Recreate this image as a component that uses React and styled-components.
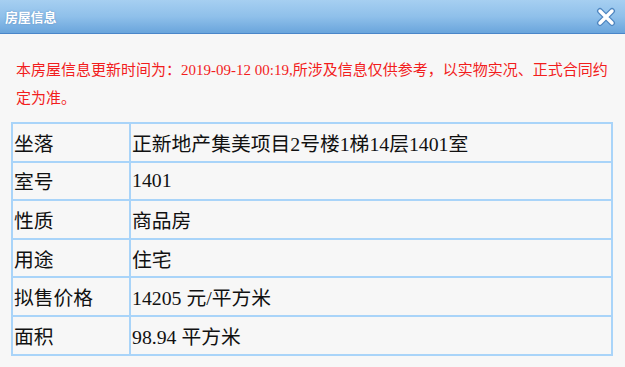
import React from 'react'
import styled, { createGlobalStyle } from 'styled-components'

const GlobalStyle = createGlobalStyle`
  html, body {
    margin: 0;
    padding: 0;
    background: #f7f7f7;
  }
`

const Dialog = styled.div`
  width: 625px;
  height: 367px;
  background: #f7f7f7;
  font-family: "Liberation Serif", "Noto Sans CJK SC", serif;
  overflow: hidden;
`

const TitleBar = styled.div`
  height: 34px;
  box-sizing: border-box;
  display: flex;
  align-items: center;
  justify-content: space-between;
  padding: 0 8px 0 5px;
  background: linear-gradient(#a6cff1, #8fc0ea 50%, #6aa5dc);
  border-bottom: 1px solid #4a86c9;
`

const Title = styled.span`
  color: #fff;
  font-family: "Noto Sans CJK SC", sans-serif;
  font-weight: 700;
  font-size: 13px;
  letter-spacing: -0.2px;
  text-shadow: 0 0 2px #5d8fc2;
`

const Close = styled.button`
  width: 22px;
  height: 22px;
  padding: 0;
  border: 0;
  background: none;
  display: flex;
  align-items: center;
  justify-content: center;
`

const Notice = styled.p`
  margin: 22px 12px 0 16px;
  color: #f21d1d;
  font-size: 15px;
  line-height: 28px;
`

const Table = styled.table`
  margin: 10px 12px 0 11px;
  width: 602px;
  border-collapse: collapse;
  border: 2px solid #a9d4f9;
`

const Row = styled.tr`
  height: 38.6px;
`

const Cell = styled.td`
  border: 2px solid #a9d4f9;
  padding: 0 0 0 1px;
  font-size: 19.8px;
  color: #111;
  width: ${p => (p.$label ? '115px' : 'auto')};
  vertical-align: middle;
  white-space: nowrap;
`

const rows = [
  ['坐落', '正新地产集美项目2号楼1梯14层1401室'],
  ['室号', '1401'],
  ['性质', '商品房'],
  ['用途', '住宅'],
  ['拟售价格', '14205 元/平方米'],
  ['面积', '98.94 平方米']
]

export default function App () {
  return (
    <Dialog>
      <GlobalStyle />
      <TitleBar>
        <Title>房屋信息</Title>
        <Close aria-label='关闭'>
          <svg width='20' height='20' viewBox='0 0 20 20'>
            <path d='M4 4 L16 16 M16 4 L4 16' stroke='#4f86c0' strokeWidth='6' strokeLinecap='round' />
            <path d='M4 4 L16 16 M16 4 L4 16' stroke='#fff' strokeWidth='3.4' strokeLinecap='round' />
          </svg>
        </Close>
      </TitleBar>
      <Notice>
        本房屋信息更新时间为：2019-09-12 00:19,所涉及信息仅供参考，以实物实况、正式合同约定为准。
      </Notice>
      <Table>
        <tbody>
          {rows.map(([label, value]) => (
            <Row key={label}>
              <Cell $label>{label}</Cell>
              <Cell>{value}</Cell>
            </Row>
          ))}
        </tbody>
      </Table>
    </Dialog>
  )
}
